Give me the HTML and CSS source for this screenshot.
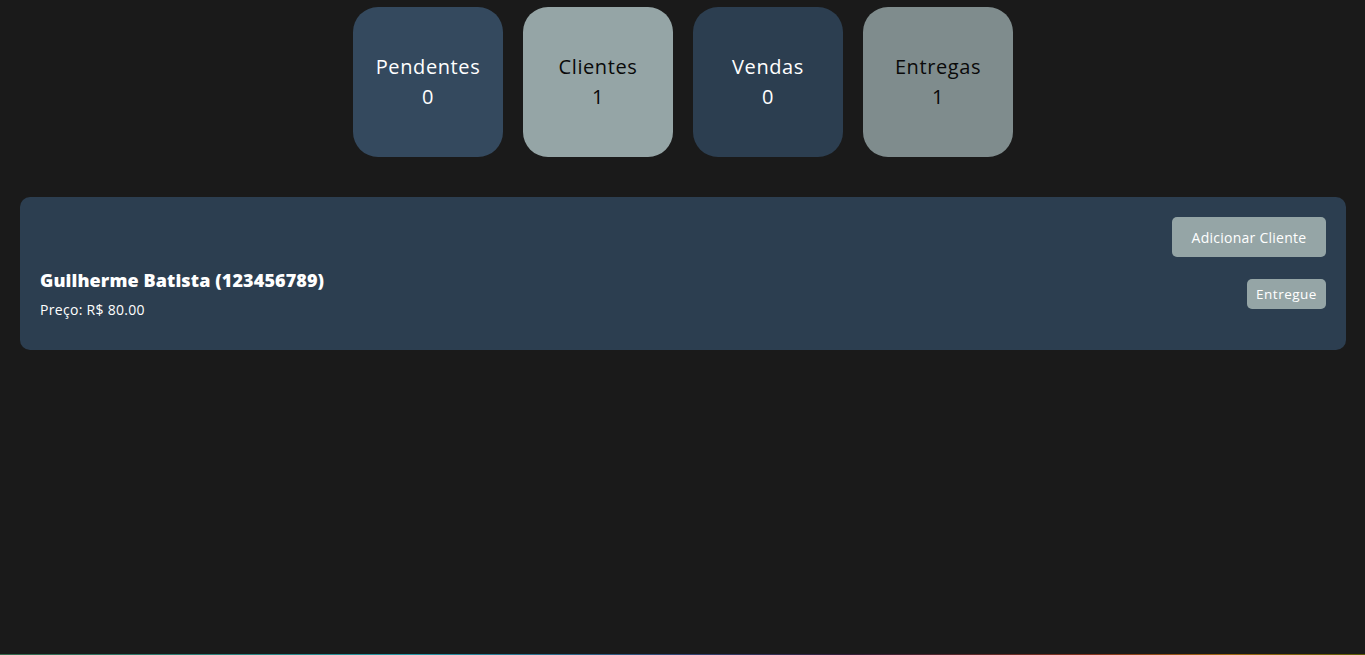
FILE: index.html
```html
<!DOCTYPE html>
<html lang="pt-BR">
<head>
<meta charset="utf-8">
<title>Painel</title>
<link rel="stylesheet" href="styles.css">
</head>
<body>
  <div class="stats">
    <div class="card card-pend"><span class="label">Pendentes</span><span class="num">0</span></div>
    <div class="card card-cli"><span class="label">Clientes</span><span class="num">1</span></div>
    <div class="card card-ven"><span class="label">Vendas</span><span class="num">0</span></div>
    <div class="card card-ent"><span class="label">Entregas</span><span class="num">1</span></div>
  </div>
  <section class="panel">
    <div class="panel-head">
      <button class="btn btn-add">Adicionar Cliente</button>
    </div>
    <div class="item">
      <div class="item-info">
        <h3 class="item-name">Guilherme Batista (123456789)</h3>
        <p class="item-price">Preço: R$ 80.00</p>
      </div>
      <button class="btn btn-done">Entregue</button>
    </div>
  </section>
  <div class="glow"></div>
</body>
</html>
```

FILE: styles.css
```css
* { box-sizing: border-box; }
html, body { height: 100%; }
body {
  margin: 0;
  background: #1a1a1a;
  font-family: "Open Sans", "Noto Sans", sans-serif;
  color: #fff;
  padding: 7px 19px 0 20px;
}
.stats {
  display: flex;
  justify-content: center;
  gap: 20px;
}
.card {
  width: 150px;
  height: 150px;
  border-radius: 25px;
  display: flex;
  flex-direction: column;
  align-items: center;
  justify-content: center;
  font-size: 20px;
  line-height: 30px;
  letter-spacing: 0.6px;
}
.card-pend { background: #34495e; color: #fff; }
.card-cli { background: #95a5a6; color: #0a0a0a; }
.card-ven { background: #2c3e50; color: #fff; }
.card-ent { background: #7f8c8d; color: #0a0a0a; }
.panel {
  margin-top: 40px;
  background: #2c3e50;
  border-radius: 10px;
  padding: 20px;
}
.panel-head {
  display: flex;
  justify-content: flex-end;
}
.btn {
  font-family: inherit;
  border: 0;
  border-radius: 5px;
  background: #95a5a6;
  color: #fff;
  padding: 0;
}
.btn-add {
  height: 40px;
  width: 154px;
  font-size: 14px;
  letter-spacing: 0.25px;
}
.item {
  display: flex;
  justify-content: space-between;
  align-items: center;
  padding: 10px 0;
}
.item-name {
  margin: 0;
  font-size: 18px;
  line-height: 27px;
  font-weight: 800;
  letter-spacing: 0.1px;
}
.item-price {
  margin: 5px 0 0;
  font-size: 14px;
  line-height: 21px;
  letter-spacing: 0.3px;
}
.btn-done {
  height: 30px;
  width: 79px;
  font-size: 13.5px;
  letter-spacing: 0.5px;
}
.glow {
  position: fixed;
  left: 0;
  right: 0;
  bottom: 0;
  height: 1px;
  background: linear-gradient(90deg, #3b7a57, #2ab7c9 30%, #3a4f8a 50%, #3a2040 62%, #a03a20 80%, #c07a10 90%, #6a6a00);
  opacity: 0.8;
}
```
